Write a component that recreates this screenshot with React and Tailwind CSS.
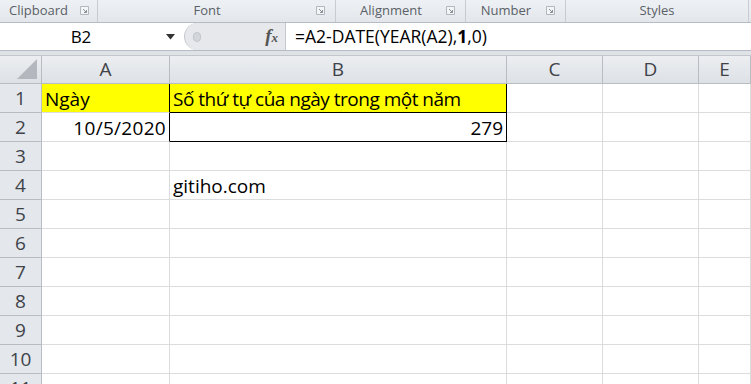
import React from "react";

const cellFont = { fontFamily: '"Open Sans", "Noto Sans", sans-serif' };

const Launcher = () => (
  <svg width="9" height="9" viewBox="0 0 9 9" className="shrink-0">
    <path d="M0.5 0.5h8v8h-8z" fill="#f4f5f7" stroke="#b3b8bf" />
    <path d="M3 3l3.5 3.5M6.5 4v2.5H4" fill="none" stroke="#8a9099" strokeWidth="1" />
  </svg>
);

const Group = ({ label, width, launcher }) => (
  <div className={`flex items-center h-full border-r border-[#c7ccd3] ${width}`}>
    <span className="flex-1 text-center text-[13px] text-[#5b5f66] leading-none pb-[2px]">
      {label}
    </span>
    {launcher && (
      <span className="pr-[10px] pb-[1px]">
        <Launcher />
      </span>
    )}
  </div>
);

const cols = ["A", "B", "C", "D", "E"];
const rows = [1, 2, 3, 4, 5, 6, 7, 8, 9, 10, 11];

const Cell = ({ children, className = "" }) => (
  <div
    className={`h-[29px] border-r border-b border-[#dadcdd] flex items-end pb-[3px] text-[19px] leading-none text-black whitespace-nowrap ${className}`}
    style={cellFont}
  >
    {children}
  </div>
);

export default function App() {
  return (
    <div
      className="w-[751px] h-[384px] overflow-hidden bg-[#dfe3e8] flex flex-col"
      style={{ fontFamily: '"Open Sans", "Noto Sans", sans-serif' }}
    >
      {/* ribbon group labels */}
      <div className="h-[23px] shrink-0 flex bg-gradient-to-b from-[#eef1f4] to-[#e3e7ec] border-b border-[#b6bcc5]">
        <div className="w-[98px] h-full flex items-center border-r border-[#c7ccd3]">
          <span className="pl-[9px] text-[13px] text-[#5b5f66] leading-none pb-[1px]">Clipboard</span>
          <span className="ml-auto pr-[8px] pb-[1px]">
            <Launcher />
          </span>
        </div>
        <Group label="Font" width="w-[238px]" launcher />
        <Group label="Alignment" width="w-[130px]" launcher />
        <Group label="Number" width="w-[100px]" launcher />
        <Group label="Styles" width="w-[183px]" />
        <div className="flex-1" />
      </div>

      {/* formula bar */}
      <div className="h-[28px] shrink-0 flex bg-white border-b border-[#b6bcc5]">
        <div className="w-[184px] flex items-center">
          <span className="flex-1 text-center text-[17px] text-black pr-[4px]">B2</span>
          <svg width="9" height="6" viewBox="0 0 9 6" className="mr-[9px]">
            <path d="M0 0h9L4.5 5.5z" fill="#333" />
          </svg>
        </div>
        <div className="w-[102px] flex items-center bg-[#e6e8ec] rounded-l-full border-l border-[#c4c8ce] border-r border-r-[#c4c8ce]">
          <span className="ml-[8px] w-[8px] h-[10px] rounded-full bg-[#d3d6db] border border-[#c2c6cc]" />
          <span
            className="ml-auto mr-[7px] text-[19px] italic font-bold text-[#555]"
            style={{ fontFamily: '"Liberation Serif", serif' }}
          >
            f<span className="text-[13px]">x</span>
          </span>
        </div>
        <div className="flex-1 flex items-center pl-[9px] text-[17.5px] text-black">
          =A2-DATE(YEAR(A2),<span className="font-bold">1</span>,0)
        </div>
      </div>

      <div className="h-[4px] shrink-0" />

      {/* grid */}
      <div className="flex-1 min-h-0 overflow-hidden bg-white grid grid-cols-[42px_128px_337px_96px_96px_1fr] content-start border-t border-[#c3c7cd]">
        {/* header row */}
        <div className="h-[28px] bg-gradient-to-b from-[#eceef1] to-[#dde1e6] border-r border-b border-[#b8bdc4] flex items-end justify-end pr-[4px] pb-[4px]">
          <svg width="20" height="20" viewBox="0 0 20 20">
            <path d="M20 0V20H0z" fill="#b4b8be" />
          </svg>
        </div>
        {cols.map((c) => (
          <div
            key={c}
            className="h-[28px] bg-gradient-to-b from-[#eceef1] to-[#dde1e6] border-r border-b border-[#b8bdc4] flex items-center justify-center text-[19px] text-[#3f4349]"
            style={cellFont}
          >
            {c}
          </div>
        ))}

        {rows.map((r) => (
          <React.Fragment key={r}>
            <div
              className="h-[29px] bg-[#e4e7eb] border-r border-b border-[#b8bdc4] flex items-center justify-center text-[19px] text-[#3f4349]"
              style={cellFont}
            >
              {r}
            </div>
            {r === 1 ? (
              <>
                <Cell className="bg-[#ffff00] border-r-black pl-[3px]">Ngày</Cell>
                <Cell className="bg-[#ffff00] border-r-black border-b-black pl-[3px] tracking-[-0.5px]">
                  Số thứ tự của ngày trong một năm
                </Cell>
              </>
            ) : r === 2 ? (
              <>
                <Cell className="border-r-black justify-end pr-[3px] tracking-[0.3px]">10/5/2020</Cell>
                <Cell className="border-r-black border-b-black justify-end pr-[3px]">279</Cell>
              </>
            ) : r === 4 ? (
              <>
                <Cell />
                <Cell className="pl-[3px]">gitiho.com</Cell>
              </>
            ) : (
              <>
                <Cell />
                <Cell />
              </>
            )}
            <Cell />
            <Cell />
            <Cell />
          </React.Fragment>
        ))}
      </div>
    </div>
  );
}
